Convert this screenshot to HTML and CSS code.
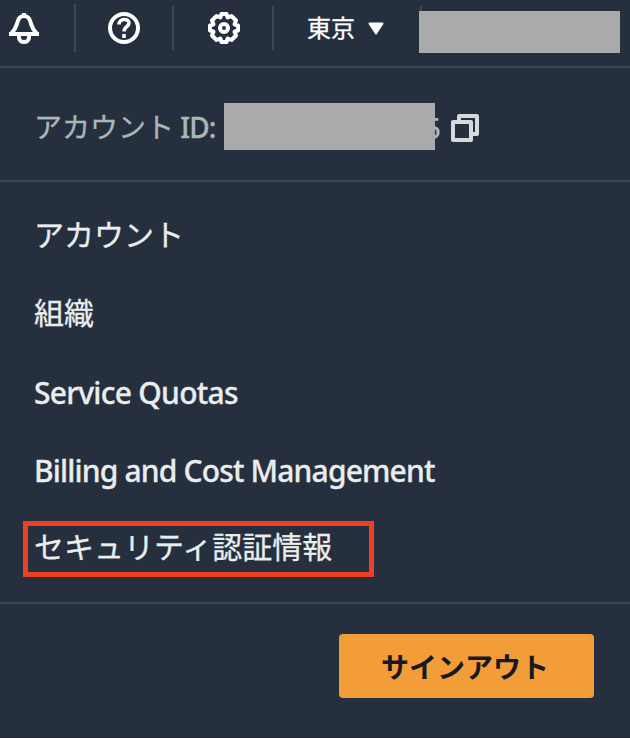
FILE: index.html
```html
<!DOCTYPE html>
<html lang="ja">
<head>
<meta charset="utf-8">
<title>アカウントメニュー</title>
<link rel="stylesheet" href="styles.css">
</head>
<body>
<main class="panel">
  <header class="topbar">
    <div class="tool tool-bell"><svg class="icon" viewBox="0 0 32 32"><path d="M16 1v3M3 22C8 17 8 15 9.500 10 10.500 6 12.500 4 16 4s5.500 2 6.500 6C24 15 24 17 29 22z"/><path d="M11 23v2.500c0 6 10 6 10 0V23M1 22h30"/></svg></div>
    <div class="tool"><svg class="icon" viewBox="0 0 32 32"><circle cx="16" cy="16" r="14"/><path class="question" d="M11 12.500c0-6.500 10-6.500 10-1.500 0 4-5 3.500-5 8.500M16 22v4"/></svg></div>
    <div class="tool tool-gear"><svg class="icon" viewBox="0 0 32 32"><path d="M13.500 2h5l1.200 3.500L23.500 4 28 8.500l-1.500 3.800L30 13.500v5l-3.500 1.200L28 23.500 23.500 28l-3.800-1.500L18.500 30h-5l-1.200-3.500L8.500 28 4 23.500l1.500-3.800L2 18.500v-5l3.500-1.200L4 8.500 8.500 4l3.800 1.500z"/><circle cx="16" cy="16" r="4"/></svg></div>
    <div class="region"><span class="region-name">東京</span><svg class="caret" viewBox="0 0 16 13"><path d="M1.500 1.500h13L8 11.500z"/></svg></div>
    <div class="user"><span class="mask user-mask"></span></div>
  </header>
  <section class="account">
    <span class="account-label">アカウント <span class="latin id">ID:</span></span>
    <span class="account-number"><span class="digit">5</span><span class="mask number-mask"></span></span>
    <svg class="copy" viewBox="0 0 28 28"><path d="M8 6V2h18v18h-4M2 8h18v18H2z"/></svg>
  </section>
  <nav class="menu">
    <a class="item">アカウント</a>
    <a class="item">組織</a>
    <a class="item latin quotas">Service Quotas</a>
    <a class="item latin billing">Billing and Cost Management</a>
    <a class="item selected">セキュリティ認証情報</a>
  </nav>
  <footer class="footer"><button class="signout">サインアウト</button></footer>
</main>
</body>
</html>
```
FILE: styles.css
```css
* { box-sizing: border-box; }
body { margin: 0; background: #262f3e; color: #eaeded; font-family: "Noto Sans CJK JP", sans-serif; }
.panel { width: 630px; height: 738px; border-bottom: 1px solid #1f2733; overflow: hidden; }
.topbar { display: flex; height: 68px; padding-top: 6px; border-bottom: 2px solid #414750; }
.tool { display: flex; justify-content: center; width: 100px; height: 44px; border-right: 2px solid #414750; flex: none; }
.tool-bell { width: 76px; height: 48px; margin-top: -2px; padding-top: 2px; justify-content: flex-start; padding-left: 8px; }
.tool:nth-child(2) { width: 98px; }
.tool-gear { padding-left: 2px; }
.icon { width: 32px; height: 32px; margin-top: 6px; fill: none; stroke: #fff; stroke-width: 4; stroke-linejoin: round; flex: none; }
.question { stroke-width: 3.5; }
.region { display: flex; align-items: center; width: 148px; height: 44px; padding-left: 33px; border-right: 2px solid #414750; color: #fff; font-size: 24px; flex: none; }
.region-name { line-height: 42px; padding-bottom: 2px; -webkit-text-stroke: .3px; }
.caret { width: 16px; height: 13px; margin-left: 13px; fill: #fff; stroke: #fff; stroke-width: 2; stroke-linejoin: round; }
.user { padding-top: 5px; margin-left: -3px; z-index: 1; }
.mask { display: block; background: #aaa; }
.user-mask { width: 201px; height: 42px; }
.account { display: flex; align-items: center; height: 114px; padding: 5px 0 0 34px; border-bottom: 2px solid #414750; color: #aab7b8; font-size: 28px; white-space: nowrap; }
.account-label { width: 190px; line-height: 40px; -webkit-text-stroke: .3px; }
.latin { font-family: "Noto Sans", "Open Sans", sans-serif; font-weight: 500; }
.id { letter-spacing: -1px; }
.account-number { position: relative; width: 217px; height: 47px; flex: none; }
.digit { position: absolute; right: 0; top: 5px; font: 500 28px/40px "Noto Sans", sans-serif; }
.number-mask { position: relative; width: 211px; height: 47px; }
.copy { width: 28px; height: 28px; margin: 2px 0 0 10px; fill: none; stroke: #d5dbdb; stroke-width: 4; stroke-linejoin: round; }
.menu { display: flex; flex-direction: column; gap: 22px; height: 422px; padding: 27px 0 0 23px; border-bottom: 2px solid #414750; }
.item { width: 351px; height: 56px; padding-left: 11px; font-size: 30px; line-height: 49px; white-space: nowrap; flex: none; -webkit-text-stroke: .3px; }
.item.latin { line-height: 56px; }
.quotas { letter-spacing: -.72px; }
.billing { letter-spacing: -.84px; }
.selected { padding-left: 6px; border: 5px solid #ea4025; line-height: 39px; }
.footer { display: flex; justify-content: flex-end; padding: 30px 36px 0 0; }
.signout { width: 255px; height: 64px; padding: 0 3px 0 0; border: 0; border-radius: 4px; background: #f29d38; color: #16191f; font: 700 28px/60px "Noto Sans CJK JP", sans-serif; }
```
